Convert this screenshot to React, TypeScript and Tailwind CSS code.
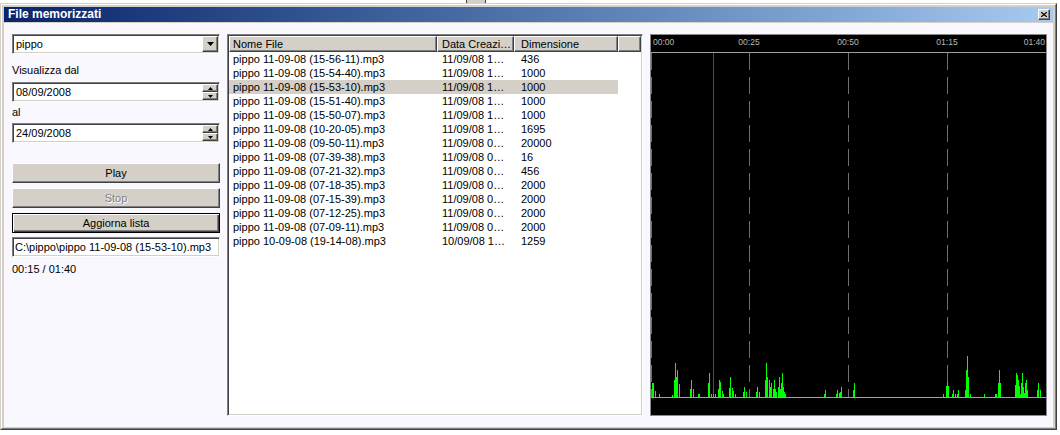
import React from 'react';

const raised =
  'bg-[#d4d0c8] border border-t-white border-l-white border-r-[#404040] border-b-[#404040] shadow-[inset_-1px_-1px_0_#808080]';
const sunken =
  'bg-white border border-t-[#808080] border-l-[#808080] border-r-white border-b-white shadow-[inset_1px_1px_0_#404040,inset_-1px_-1px_0_#d4d0c8]';

const files: [string, string, string][] = [
  ['pippo 11-09-08 (15-56-11).mp3', '11/09/08 1…', '436'],
  ['pippo 11-09-08 (15-54-40).mp3', '11/09/08 1…', '1000'],
  ['pippo 11-09-08 (15-53-10).mp3', '11/09/08 1…', '1000'],
  ['pippo 11-09-08 (15-51-40).mp3', '11/09/08 1…', '1000'],
  ['pippo 11-09-08 (15-50-07).mp3', '11/09/08 1…', '1000'],
  ['pippo 11-09-08 (10-20-05).mp3', '11/09/08 1…', '1695'],
  ['pippo 11-09-08 (09-50-11).mp3', '11/09/08 0…', '20000'],
  ['pippo 11-09-08 (07-39-38).mp3', '11/09/08 0…', '16'],
  ['pippo 11-09-08 (07-21-32).mp3', '11/09/08 0…', '456'],
  ['pippo 11-09-08 (07-18-35).mp3', '11/09/08 0…', '2000'],
  ['pippo 11-09-08 (07-15-39).mp3', '11/09/08 0…', '2000'],
  ['pippo 11-09-08 (07-12-25).mp3', '11/09/08 0…', '2000'],
  ['pippo 11-09-08 (07-09-11).mp3', '11/09/08 0…', '2000'],
  ['pippo 10-09-08 (19-14-08).mp3', '10/09/08 1…', '1259'],
];

// x position, height above the baseline
const spikes: [number, number][] = [
  [652, 14], [653, 14], [655, 6], [659, 3], [672, 2], [674, 17], [675, 34], [676, 20], [677, 27], [679, 13],
  [690, 8], [691, 17], [693, 8], [698, 3], [699, 3], [708, 14], [709, 24], [711, 3], [713, 3], [715, 3],
  [718, 8], [719, 17], [720, 15], [722, 6], [723, 3], [729, 9], [730, 20], [732, 9], [733, 6], [735, 3],
  [743, 5], [744, 10], [746, 5], [756, 5], [757, 10], [759, 5],
  [765, 17], [766, 34], [767, 20], [769, 17], [770, 10], [771, 14], [773, 8], [774, 17], [775, 8], [776, 5],
  [778, 10], [779, 20], [780, 8], [781, 14], [782, 24], [783, 10], [784, 5], [785, 3],
  [824, 3], [825, 7], [836, 3], [837, 7], [839, 4], [840, 5], [841, 10], [853, 7], [854, 14],
  [943, 3], [946, 11], [947, 15], [948, 11], [952, 3], [953, 7], [955, 3], [957, 3], [958, 7],
  [965, 7], [966, 27], [967, 41], [968, 20], [970, 3], [984, 3], [995, 3], [996, 3], [998, 14], [999, 27], [1000, 14],
  [1015, 12], [1016, 24], [1017, 22], [1018, 17], [1019, 11], [1020, 3], [1021, 14], [1022, 24], [1023, 10],
  [1024, 4], [1025, 14], [1026, 17], [1027, 7], [1037, 7], [1038, 14], [1040, 7],
];

const DownArrow = () => (
  <svg width="7" height="4" viewBox="0 0 7 4">
    <path d="M0 0h7L3.5 4z" fill="#000" />
  </svg>
);

const Spin = () => (
  <div className="w-[16px] h-[16px] mr-[1px] flex flex-col">
    <div className={`${raised} h-[8px] flex items-center justify-center`}>
      <svg width="5" height="3" viewBox="0 0 5 3">
        <path d="M0 3h5L2.5 0z" fill="#000" />
      </svg>
    </div>
    <div className={`${raised} h-[8px] flex items-center justify-center`}>
      <svg width="5" height="3" viewBox="0 0 5 3">
        <path d="M0 0h5L2.5 3z" fill="#000" />
      </svg>
    </div>
  </div>
);

const Waveform = () => {
  const grid = [651.5, 749.5, 848.5, 947.5, 1046.5];
  return (
    <div className="w-[397px] h-[382px] bg-black border border-[#8a8a8a]">
      <svg width="395" height="380" viewBox="651 35 395 380" className="block">
        <g fill="#b8b8b8" fontSize="8.5" fontFamily="'Liberation Sans', Arial, sans-serif">
          <text x="653" y="45">00:00</text>
          <text x="749" y="45" textAnchor="middle">00:25</text>
          <text x="848" y="45" textAnchor="middle">00:50</text>
          <text x="947" y="45" textAnchor="middle">01:15</text>
          <text x="1045" y="45" textAnchor="end">01:40</text>
        </g>
        <line x1="651" y1="52.5" x2="1046" y2="52.5" stroke="#a0a0a0" />
        {grid.map((x) => (
          <line key={x} x1={x} y1="53" x2={x} y2="397" stroke="#6e6e6e" strokeDasharray="17 7" />
        ))}
        <line x1="713.5" y1="53" x2="713.5" y2="397" stroke="#ff0000" />
        {spikes.map(([x, h], i) => (
          <line key={i} x1={x + 0.5} y1="397" x2={x + 0.5} y2={397 - h} stroke="#00ff00" />
        ))}
        <line x1="651" y1="397.5" x2="1046" y2="397.5" stroke="#a0a0a0" />
      </svg>
    </div>
  );
};

export default function App() {
  return (
    <div className="w-[1060px] h-[435px] bg-white overflow-hidden font-['Liberation_Sans',Arial,sans-serif] text-[11px] leading-[14px] text-black">
      {/* bits of the window behind */}
      <div className="h-[3px] flex">
        <div className="ml-[466px] w-[20px] h-[3px] bg-[#d4d0c8] border-l border-r border-[#404040]" />
      </div>

      <div className="w-[1057px] h-[427px] bg-[#d4d0c8] border border-t-[#d4d0c8] border-l-[#d4d0c8] border-r-[#404040] border-b-[#404040] flex flex-col">
        <div className="flex-1 flex flex-col border border-t-white border-l-white border-r-[#808080] border-b-[#808080] px-[2px] pt-[2px] pb-[1px]">
          {/* title bar */}
          <div className="h-[15px] bg-gradient-to-r from-[#0a246a] to-[#a6caf0] flex items-center justify-between pl-[4px] pr-[3px]">
            <span className="text-white font-bold text-[12px] leading-[15px]">File memorizzati</span>
            <div className={`${raised} w-[12px] h-[11px] flex items-center justify-center`}>
              <svg width="6" height="5" viewBox="0 0 6 5">
                <path d="M0 0l6 5M6 0L0 5" stroke="#000" strokeWidth="1.2" />
              </svg>
            </div>
          </div>

          {/* body */}
          <div className="mt-[1px] flex-1 bg-[#f8f8fe] flex pl-[8px] pr-[1px] pt-[11px]">
            {/* left controls */}
            <div className="w-[208px] flex flex-col">
              <div className={`${sunken} h-[20px] flex items-center`}>
                <span className="flex-1 pl-[3px]">pippo</span>
                <div className={`${raised} w-[16px] h-[16px] mr-[1px] flex items-center justify-center`}>
                  <DownArrow />
                </div>
              </div>

              <div className="mt-[10px] h-[13px] leading-[13px]">Visualizza dal</div>
              <div className={`${sunken} mt-[5px] h-[20px] flex items-center`}>
                <span className="flex-1 pl-[3px]">08/09/2008</span>
                <Spin />
              </div>

              <div className="mt-[4px] h-[13px] leading-[13px]">al</div>
              <div className={`${sunken} mt-[4px] h-[20px] flex items-center`}>
                <span className="flex-1 pl-[3px]">24/09/2008</span>
                <Spin />
              </div>

              <div className={`${raised} mt-[20px] h-[20px] flex items-center justify-center`}>Play</div>
              <div className={`${raised} mt-[5px] h-[20px] flex items-center justify-center text-[#808080] [text-shadow:1px_1px_0_#fff]`}>
                Stop
              </div>
              <div className="mt-[5px] h-[20px] bg-[#d4d0c8] border border-black shadow-[inset_1px_1px_0_#fff,inset_-1px_-1px_0_#404040,inset_-2px_-2px_0_#808080] flex items-center justify-center">
                Aggiorna lista
              </div>

              <div className={`${sunken} mt-[4px] h-[20px] flex items-center`}>
                <span className="pl-[2px] whitespace-nowrap">C:\pippo\pippo 11-09-08 (15-53-10).mp3</span>
              </div>

              <div className="mt-[6px] h-[13px] leading-[13px]">00:15 / 01:40</div>
            </div>

            {/* file list */}
            <div className={`${sunken} ml-[7px] w-[416px] h-[382px] p-[1px] flex flex-col`}>
              <div className="h-[16px] flex">
                <div className={`${raised} w-[208px] pl-[3px] flex items-center`}>Nome File</div>
                <div className={`${raised} w-[77px] pl-[4px] flex items-center whitespace-nowrap`}>Data Creazi…</div>
                <div className={`${raised} w-[104px] pl-[6px] flex items-center`}>Dimensione</div>
                <div className={`${raised} flex-1`} />
              </div>
              {files.map(([name, date, size], i) => (
                <div key={name} className={`h-[14px] w-[389px] flex ${i === 2 ? 'bg-[#d4d0c8]' : ''}`}>
                  <div className="w-[208px] pl-[4px] whitespace-nowrap">{name}</div>
                  <div className="w-[77px] pl-[5px] whitespace-nowrap">{date}</div>
                  <div className="w-[104px] pl-[7px]">{size}</div>
                </div>
              ))}
            </div>

            {/* waveform */}
            <div className="ml-[7px]">
              <Waveform />
            </div>
          </div>
        </div>
      </div>
    </div>
  );
}
